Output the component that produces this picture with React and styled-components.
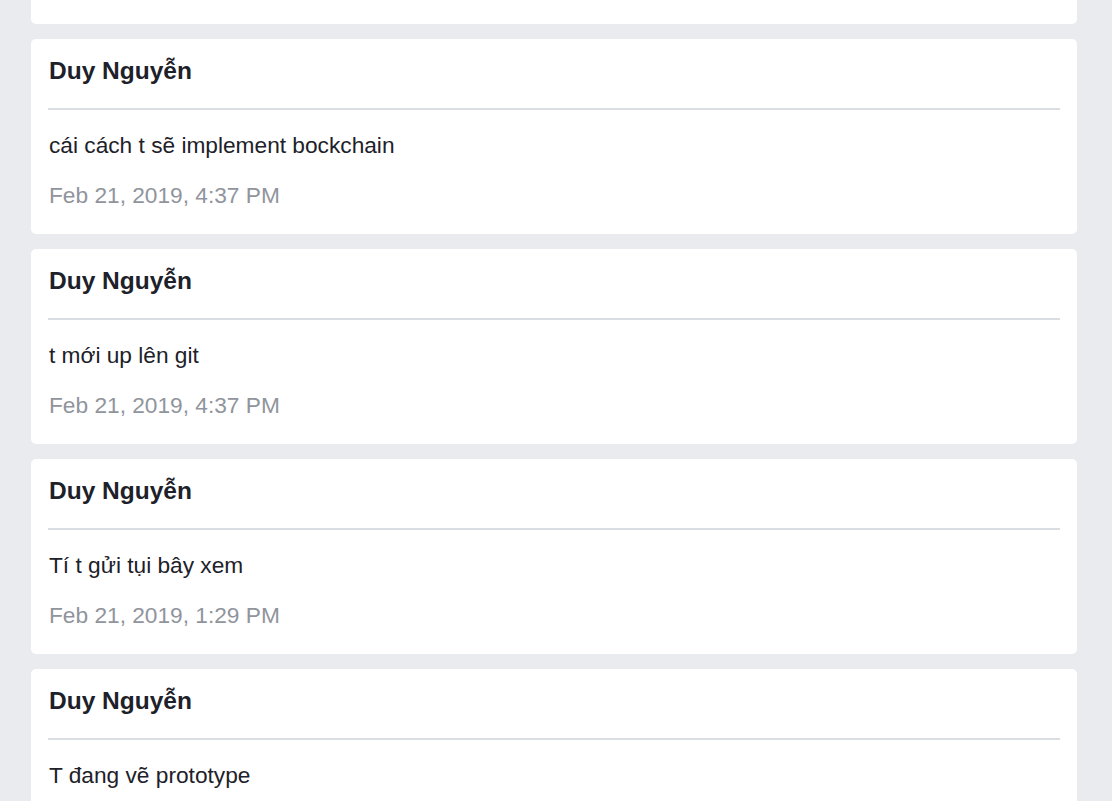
import React from "react"
import styled, { createGlobalStyle } from "styled-components"

const GlobalStyle = createGlobalStyle`
  html, body {
    margin:0;
    padding:0;
    background:#e9ebee;
    font-family:"Liberation Sans", Arial, sans-serif;
    overflow:hidden;
  }
`;

const Feed = styled.main`
  display:flex;
  flex-direction:column;
  gap:15px;
  width:1046px;
  margin-left:31px;
`;

// bottom of the previous message, scrolled mostly out of view
const CardTail = styled.div`
  height:24px;
  background:#fff;
  border-radius:0 0 5px 5px;
`;

const Card = styled.article`
  background:#fff;
  border-radius:5px;
  padding:18px 17px 25px;
  height:195px;
  box-sizing:border-box;
`;

const Author = styled.h3`
  margin:0;
  padding-left:1px;
  font-size:24.5px;
  line-height:28px;
  font-weight:700;
  color:#1d2129;
`;

const Divider = styled.hr`
  margin:23px 0 0;
  border:none;
  height:2px;
  background:#dadde1;
`;

const Body = styled.p`
  margin:21px 0 0;
  padding-left:1px;
  font-size:22.7px;
  line-height:28px;
  color:#1d2129;
`;

const Time = styled.time`
  display:block;
  margin-top:22px;
  padding-left:1px;
  font-size:22.7px;
  line-height:28px;
  color:#90949c;
`;

const messages = [
  { author: "Duy Nguyễn", text: "cái cách t sẽ implement bockchain", time: "Feb 21, 2019, 4:37 PM" },
  { author: "Duy Nguyễn", text: "t mới up lên git", time: "Feb 21, 2019, 4:37 PM" },
  { author: "Duy Nguyễn", text: "Tí t gửi tụi bây xem", time: "Feb 21, 2019, 1:29 PM" },
  { author: "Duy Nguyễn", text: "T đang vẽ prototype", time: "Feb 21, 2019, 1:28 PM" },
];

const App = () => (
  <>
    <GlobalStyle />
    <Feed>
      <CardTail />
      {messages.map((m, i) => (
        <Card key={i}>
          <Author>{m.author}</Author>
          <Divider />
          <Body>{m.text}</Body>
          <Time>{m.time}</Time>
        </Card>
      ))}
    </Feed>
  </>
)

export default App
